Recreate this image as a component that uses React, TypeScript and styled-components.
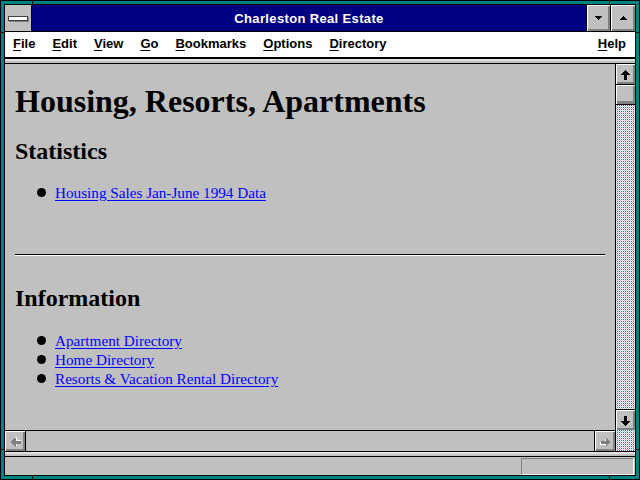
import React from "react"
import styled, { createGlobalStyle } from "styled-components"

const GlobalStyle = createGlobalStyle`
  html, body {
    margin: 0;
    padding: 0;
    background: #008080;
  }
  body {
    width: 640px;
    height: 480px;
    overflow: hidden;
  }
`

const Frame = styled.div`
  position: relative;
  width: 640px;
  height: 480px;
  box-sizing: border-box;
  border: 1px solid #000;
  padding: 3px;
  background: #008080;
`

const Tick = styled.span<{ $x?: number; $y?: number; $side: "top" | "bottom" | "left" | "right" }>`
  position: absolute;
  background: #000;
  ${(p) =>
    p.$side === "top" || p.$side === "bottom"
      ? `left: ${(p.$x ?? 0) - 1}px; width: 1px; height: 3px; ${p.$side}: 0;`
      : `top: ${(p.$y ?? 0) - 1}px; height: 1px; width: 3px; ${p.$side}: 0;`}
`

const Window = styled.div`
  height: 100%;
  box-sizing: border-box;
  border: 1px solid #000;
  background: #c0c0c0;
  display: flex;
  flex-direction: column;
`

const TitleBar = styled.div`
  display: flex;
  height: 27px;
  box-sizing: border-box;
  border-bottom: 1px solid #000;
  background: #000080;
`

const SysMenu = styled.div`
  width: 27px;
  box-sizing: border-box;
  border-right: 1px solid #000;
  background: #c0c0c0;
  display: flex;
  align-items: center;
  justify-content: center;
`

const SysBar = styled.div`
  width: 18px;
  height: 3px;
  margin-left: -1px;
  margin-top: 1px;
  background: #fff;
  border: 1px solid #404040;
  box-shadow: 1px 1px 0 #808080;
`

const Title = styled.div`
  flex: 1;
  display: flex;
  align-items: center;
  justify-content: center;
  color: #fff;
  font: bold 13px "Liberation Sans", Arial, sans-serif;
  letter-spacing: 0.35px;
  padding-top: 1px;
`

const TitleButton = styled.div<{ $w: number }>`
  width: ${(p) => p.$w}px;
  box-sizing: border-box;
  border-left: 1px solid #000;
  background: #c0c0c0;
  box-shadow: inset 1px 1px 0 #fff, inset -2px -2px 0 #808080;
  display: flex;
  align-items: center;
  justify-content: center;
`

const MenuBar = styled.div`
  display: flex;
  align-items: flex-start;
  height: 25px;
  background: #fff;
  padding-left: 8px;
  gap: 17px;
  font: bold 13px "Liberation Sans", Arial, sans-serif;
  line-height: 23px;
  color: #000;
`

const MenuItem = styled.span<{ $right?: boolean }>`
  ${(p) => (p.$right ? "margin-left: auto; padding-right: 9px;" : "")}
  u {
    text-decoration: underline;
    text-underline-offset: 2px;
    text-decoration-thickness: 1px;
  }
`

const Separator = styled.div<{ $top: number }>`
  height: 4px;
  border-top: ${(p) => p.$top}px solid #000;
  border-bottom: 1px solid #000;
  background: linear-gradient(#e2e2e2 0 2px, #c0c0c0 2px 4px);
`

const Main = styled.div`
  flex: 1;
  display: flex;
  min-height: 0;
`

const Content = styled.div`
  flex: 1;
  border-right: 1px solid #000;
  padding: 0 10px;
  overflow: hidden;
  font-family: "Liberation Serif", "Times New Roman", serif;
  color: #000;
`

const H1 = styled.h1`
  margin: 18px 0 0;
  font-size: 32px;
  line-height: 38px;
  font-weight: bold;
  white-space: nowrap;
`

const H2 = styled.h2<{ $mt: number }>`
  margin: ${(p) => p.$mt}px 0 0;
  font-size: 24px;
  line-height: 28px;
  font-weight: bold;
`

const List = styled.ul<{ $mt: number }>`
  list-style: none;
  margin: ${(p) => p.$mt}px 0 0;
  padding: 0 0 0 40px;
`

const Item = styled.li`
  position: relative;
  font-size: 15.2px;
  line-height: 19px;

  &::before {
    content: "";
    position: absolute;
    left: -18px;
    top: 5px;
    width: 9px;
    height: 9px;
    border-radius: 50%;
    background: #000;
  }
`

const Link = styled.a`
  color: #0000ff;
  text-decoration: underline;
  text-underline-offset: 2px;
`

const Rule = styled.hr`
  margin: 52px 0 0;
  border: 0;
  border-top: 1px solid #000;
  border-bottom: 1px solid #fff;
  height: 0;
`

const VScroll = styled.div`
  width: 19px;
  display: flex;
  flex-direction: column;
`

const Dither = styled.div`
  background-color: #c0c0c0;
  background-image: conic-gradient(#008080 0 25%, #ffffff 0 50%, #c0c0c0 0 75%, #ffffff 0);
  background-size: 2px 2px;
`

const Track = styled(Dither)`
  flex: 1;
`

const ScrollButton = styled.div<{ $edge: "top" | "bottom" | "left" | "right" }>`
  flex: none;
  width: ${(p) => (p.$edge === "left" || p.$edge === "right" ? "21px" : "19px")};
  height: ${(p) => (p.$edge === "left" || p.$edge === "right" ? "20px" : "21px")};
  box-sizing: border-box;
  border-${(p) => p.$edge}: 1px solid #000;
  background: #c0c0c0;
  box-shadow: inset 1px 1px 0 #fff, inset -2px -2px 0 #808080;
  display: flex;
  align-items: center;
  justify-content: center;
`

const Thumb = styled.div`
  height: 20px;
  box-sizing: border-box;
  border-bottom: 1px solid #000;
  background: #c0c0c0;
  box-shadow: inset 1px 1px 0 #fff, inset -2px -3px 0 #808080;
`

const HScrollRow = styled.div`
  display: flex;
  height: 21px;
`

const HScroll = styled.div`
  flex: 1;
  display: flex;
  border-top: 1px solid #000;
  border-right: 1px solid #000;
`

const HTrack = styled.div`
  flex: 1;
  background: #c0c0c0;
`

const Corner = styled(Dither)`
  width: 19px;
`

const StatusBar = styled.div`
  height: 18px;
  display: flex;
  justify-content: flex-end;
  padding: 1px 1px 0 0;
  box-sizing: border-box;
`

const StatusField = styled.div`
  width: 113px;
  height: 17px;
  box-sizing: border-box;
  border-top: 1px solid #808080;
  border-left: 1px solid #808080;
  border-bottom: 1px solid #fff;
  border-right: 1px solid #fff;
`

const Triangle = ({ up }: { up?: boolean }) => (
  <svg width="7" height="4" viewBox="0 0 7 4" shapeRendering="crispEdges">
    <polygon points={up ? "3.5,0 7,4 0,4" : "0,0 7,0 3.5,4"} fill="#000" />
  </svg>
)

const Arrow = ({ dir, disabled }: { dir: "up" | "down" | "left" | "right"; disabled?: boolean }) => {
  const rot = { up: 0, right: 90, down: 180, left: 270 }[dir]
  const shape = "4.5,0 9,5 6,5 6,10 3,10 3,5 0,5"
  return (
    <svg width="11" height="11" viewBox="-1 -1 11 11" shapeRendering="crispEdges">
      <g transform={`rotate(${rot} 4.5 5)`}>
        {disabled && <polygon points={shape} fill="#fff" transform="translate(1 1)" />}
        <polygon points={shape} fill={disabled ? "#808080" : "#000"} />
      </g>
    </svg>
  )
}

const menu = [
  ["F", "ile"],
  ["E", "dit"],
  ["V", "iew"],
  ["G", "o"],
  ["B", "ookmarks"],
  ["O", "ptions"],
  ["D", "irectory"],
]

export default function App() {
  return (
    <>
      <GlobalStyle />
      <Frame>
        <Tick $side="top" $x={32} />
        <Tick $side="top" $x={609} />
        <Tick $side="bottom" $x={32} />
        <Tick $side="bottom" $x={609} />
        <Tick $side="left" $y={32} />
        <Tick $side="left" $y={449} />
        <Tick $side="right" $y={32} />
        <Tick $side="right" $y={449} />
        <Window>
          <TitleBar>
            <SysMenu>
              <SysBar />
            </SysMenu>
            <Title>Charleston Real Estate</Title>
            <TitleButton $w={24}>
              <Triangle />
            </TitleButton>
            <TitleButton $w={25}>
              <Triangle up />
            </TitleButton>
          </TitleBar>
          <MenuBar>
            {menu.map(([k, rest]) => (
              <MenuItem key={k}>
                <u>{k}</u>
                {rest}
              </MenuItem>
            ))}
            <MenuItem $right>
              <u>H</u>elp
            </MenuItem>
          </MenuBar>
          <Separator $top={2} />
          <Main>
            <Content>
              <H1>Housing, Resorts, Apartments</H1>
              <H2 $mt={17}>Statistics</H2>
              <List $mt={18}>
                <Item>
                  <Link href="#">Housing Sales Jan-June 1994 Data</Link>
                </Item>
              </List>
              <Rule />
              <H2 $mt={28}>Information</H2>
              <List $mt={19}>
                <Item>
                  <Link href="#">Apartment Directory</Link>
                </Item>
                <Item>
                  <Link href="#">Home Directory</Link>
                </Item>
                <Item>
                  <Link href="#">Resorts &amp; Vacation Rental Directory</Link>
                </Item>
              </List>
            </Content>
            <VScroll>
              <ScrollButton $edge="bottom">
                <Arrow dir="up" />
              </ScrollButton>
              <Thumb />
              <Track />
              <ScrollButton $edge="top">
                <Arrow dir="down" />
              </ScrollButton>
            </VScroll>
          </Main>
          <HScrollRow>
            <HScroll>
              <ScrollButton $edge="right">
                <Arrow dir="left" disabled />
              </ScrollButton>
              <HTrack />
              <ScrollButton $edge="left">
                <Arrow dir="right" disabled />
              </ScrollButton>
            </HScroll>
            <Corner />
          </HScrollRow>
          <Separator $top={1} />
          <StatusBar>
            <StatusField />
          </StatusBar>
        </Window>
      </Frame>
    </>
  )
}
